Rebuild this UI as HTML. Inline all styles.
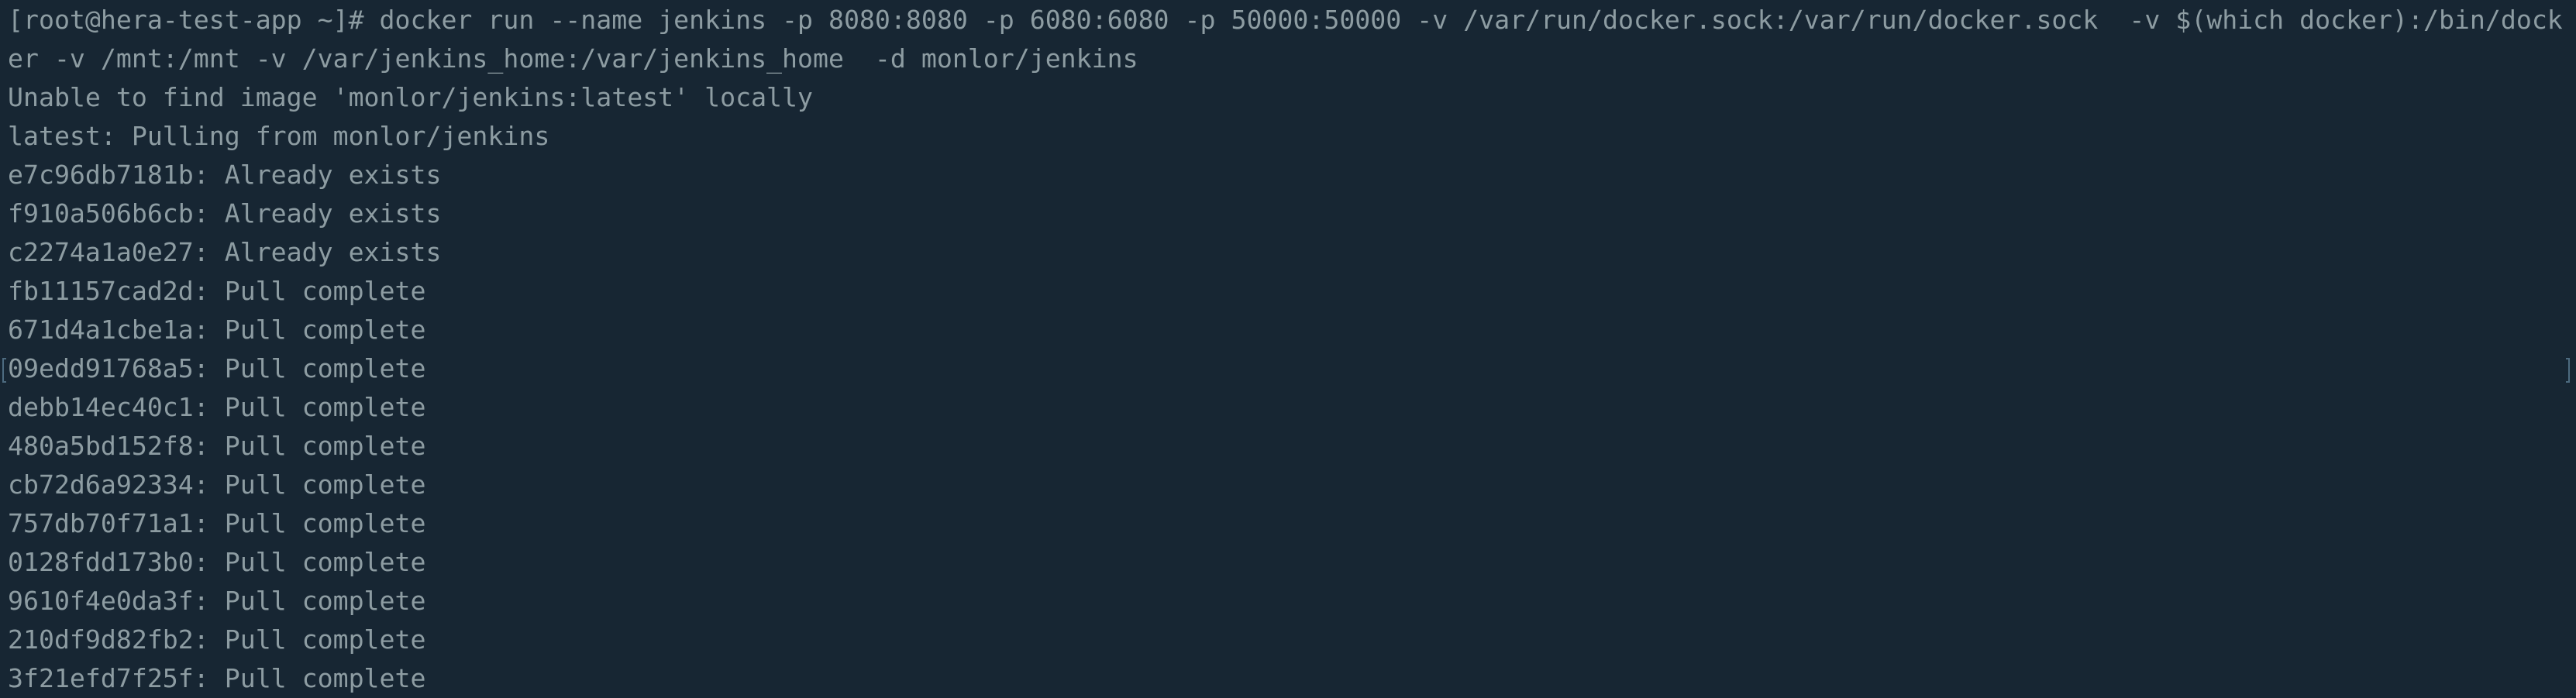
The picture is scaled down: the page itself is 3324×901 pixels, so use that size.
<!DOCTYPE html>
<html><head><meta charset="utf-8"><style>
html,body{margin:0;padding:0;}
body{width:3324px;height:882px;overflow:hidden;background:#172633;position:relative;}
pre{margin:0;position:absolute;left:10px;top:1px;font-family:"DejaVu Sans Mono","Liberation Mono",monospace;font-size:33.2px;line-height:50px;color:#8d9ca2;white-space:pre;}
.b{position:absolute;width:3px;height:28px;border:2px solid #4d6b80;top:462px;}
</style></head><body>
<pre>[root@hera-test-app ~]# docker run --name jenkins -p 8080:8080 -p 6080:6080 -p 50000:50000 -v /var/run/docker.sock:/var/run/docker.sock  -v $(which docker):/bin/dock
er -v /mnt:/mnt -v /var/jenkins_home:/var/jenkins_home  -d monlor/jenkins
Unable to find image 'monlor/jenkins:latest' locally
latest: Pulling from monlor/jenkins
e7c96db7181b: Already exists
f910a506b6cb: Already exists
c2274a1a0e27: Already exists
fb11157cad2d: Pull complete
671d4a1cbe1a: Pull complete
09edd91768a5: Pull complete
debb14ec40c1: Pull complete
480a5bd152f8: Pull complete
cb72d6a92334: Pull complete
757db70f71a1: Pull complete
0128fdd173b0: Pull complete
9610f4e0da3f: Pull complete
210df9d82fb2: Pull complete
3f21efd7f25f: Pull complete</pre>
<div class="b" style="left:3px;border-right:none;"></div>
<div class="b" style="left:3311px;border-left:none;"></div>
</body></html>
